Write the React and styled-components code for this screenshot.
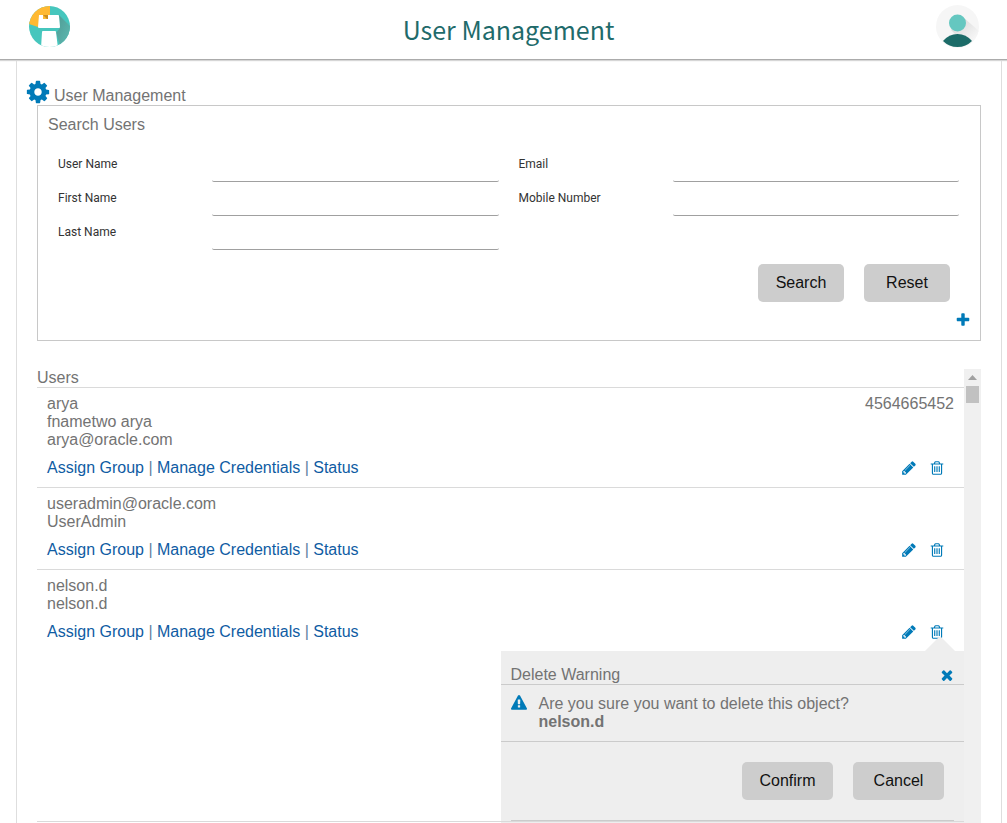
import React from 'react';
import styled, { createGlobalStyle } from 'styled-components';

const Global = createGlobalStyle`
  *, *::before, *::after { box-sizing: border-box; }
  body {
    margin: 0;
    background: #fff;
    color: #737373;
    font: 16px/18px "Liberation Sans", Arial, sans-serif;
  }
`;

const App = styled.div`
  display: flex;
  flex-direction: column;
  height: 100vh;
  overflow: hidden;
`;

const Header = styled.header`
  display: flex;
  flex: none;
  align-items: center;
  justify-content: space-between;
  height: 60px;
  padding: 0 28px 6px 29px;
  border-bottom: 1px solid #ababab;
  box-shadow: 0 1px 1px #d6d6d6;
`;

const Title = styled.h1`
  margin: 0;
  padding: 4px 0 0 10px;
  color: #1f6b6b;
  font: 400 25px/36px "Noto Sans CJK SC", sans-serif;
`;

const Drawing = styled.svg`
  display: block;
  flex: none;
  width: ${(p) => p.$size}px;
  height: ${(p) => p.$size}px;
`;

const Page = styled.main`
  display: flex;
  flex: 1;
  flex-direction: column;
  min-height: 0;
  margin: 1px 5px 0 16px;
  padding: 18px 20px 0;
  border: 1px solid #dedede;
  border-width: 0 1px;
`;

const PageHeading = styled.h2`
  display: flex;
  flex: none;
  align-items: center;
  gap: 3px;
  height: 26px;
  margin: 0 0 0 -12px;
  font: inherit;

  span { padding-top: 7px; }
`;

const SearchPanel = styled.form`
  display: flex;
  flex: none;
  flex-direction: column;
  padding: 10px 21px 12px 20px;
  border: 1px solid #c8c8c8;
`;

const PanelTitle = styled.h3`
  margin: 0 0 0 -10px;
  padding-bottom: 15px;
  font: inherit;
`;

const Fields = styled.div`
  display: flex;
  gap: 20px;
`;

const FieldColumn = styled.div`
  flex: 1;
  min-width: 0;
`;

const Field = styled.label`
  display: flex;
  align-items: flex-start;
  justify-content: space-between;
  height: 34px;
  color: #333;
  font: 12px/30px Roboto, sans-serif;
`;

const TextBox = styled.input`
  width: 65%;
  height: 29px;
  margin-top: 4px;
  padding: 0 4px;
  border: 0;
  border-bottom: 1px solid #a0a0a0;
  border-radius: 2px;
  outline: none;
  background: transparent;
  font: inherit;
`;

const ButtonRow = styled.div`
  display: flex;
  justify-content: flex-end;
  gap: 20px;
  padding: ${(p) => p.$padding};
`;

const Button = styled.button`
  min-width: ${(p) => p.$width || 86}px;
  height: 38px;
  padding: 0 16px;
  border: 0;
  border-radius: 5px;
  background: #cdcdcd;
  color: #111;
  font: inherit;
`;

const IconButton = styled.button`
  display: flex;
  align-items: center;
  justify-content: center;
  width: 16px;
  height: 16px;
  padding: 0;
  border: 0;
  background: none;
  color: #007ab8;
`;

const ExpandRow = styled.div`
  display: flex;
  justify-content: flex-end;
  margin-right: -12px;
  padding-top: 10px;
`;

const Glyph = styled.svg`
  display: block;
  flex: none;
  width: ${(p) => p.$size}px;
  height: ${(p) => p.$size}px;
  fill: #007ab8;
`;

const UsersArea = styled.section`
  display: flex;
  flex: 1;
  min-height: 0;
  margin-top: 28px;
`;

const UsersPane = styled.div`
  flex: 1;
  min-width: 0;
  overflow: hidden;
`;

const UsersTitle = styled.h3`
  height: 18px;
  margin: 0;
  font: inherit;
`;

const UserList = styled.ul`
  margin: 0;
  padding: 0;
  list-style: none;

  &::after {
    position: relative;
    display: block;
    border-top: 1px solid #dadada;
    content: "";
  }
`;

const UserItem = styled.li`
  border-top: 1px solid #dadada;
`;

const UserBody = styled.div`
  padding: 7px 10px 10px;
`;

const UserLine = styled.div`
  display: flex;
  justify-content: space-between;
`;

const Actions = styled.div`
  display: flex;
  align-items: center;
  justify-content: space-between;
  padding: 10px 9px 0 0;
`;

const Links = styled.nav`
  color: #5f7f9f;

  a {
    color: #0f5ca3;
    text-decoration: none;
  }
`;

const Tools = styled.div`
  display: flex;
  gap: 12px;
`;

const ScrollTrack = styled.div`
  display: flex;
  flex: none;
  flex-direction: column;
  align-items: center;
  width: 17px;
  background: #f0f0f0;

  svg { fill: #a0a0a0; }
`;

const ScrollThumb = styled.div`
  width: 13px;
  height: 17px;
  background: #c1c1c1;
`;

const Dialog = styled.section`
  position: relative;
  width: 50%;
  margin: 0 0 -13px auto;
  padding-top: 14px;
  background: #eee;

  &::before {
    position: absolute;
    top: -15px;
    right: 9px;
    border: 15px solid transparent;
    border-top: 0;
    border-bottom-color: #eee;
    content: "";
  }
`;

const DialogHeader = styled.header`
  display: flex;
  align-items: center;
  justify-content: space-between;
  height: 20px;
  padding: 0 9px 0 10px;
  border-bottom: 1px solid #cbcbcb;
`;

const DialogMessage = styled.div`
  display: flex;
  gap: 12px;
  height: 57px;
  padding: 10px;
  border-bottom: 1px solid #cbcbcb;

  p { margin: 0; }
`;

const DialogEnd = styled.div`
  height: 14px;
  margin: 0 10px;
  border-top: 1px solid #cbcbcb;
`;

const paths = {
  cog: 'M1152 896q0-106-75-181t-181-75-181 75-75 181 75 181 181 75 181-75 75-181zm512-109v222q0 12-8 23t-20 13l-185 28q-19 54-39 91 35 50 107 138 10 12 10 25t-9 23q-27 37-99 108t-94 71q-12 0-26-9l-138-108q-44 23-91 38-16 136-29 186-7 28-36 28h-222q-14 0-24.5-8.5t-11.5-21.5l-28-184q-49-16-90-37l-141 107q-10 9-25 9-14 0-25-11-126-114-165-168-7-10-7-23 0-12 8-23 15-21 51-66.5t54-70.5q-27-50-41-99l-183-27q-13-2-21-12.5t-8-23.5v-222q0-12 8-23t19-13l186-28q14-46 39-92-40-57-107-138-10-12-10-24 0-10 9-23 26-36 98.5-107.5t94.5-71.5q13 0 26 10l138 107q44-23 91-38 16-136 29-186 7-28 36-28h222q14 0 24.5 8.5t11.5 21.5l28 184q49 16 90 37l142-107q9-9 24-9 13 0 25 10 129 119 165 170 7 8 7 22 0 12-8 23-15 21-51 66.5t-54 70.5q26 50 41 98l183 28q13 2 21 12.5t8 23.5z',
  pencil: 'M491 1536l91-91-235-235-91 91v107h128v128h107zm523-928q0-22-22-22-10 0-17 7l-542 542q-7 7-7 17 0 22 22 22 10 0 17-7l542-542q7-7 7-17zm-54-192l416 416-832 832h-416v-416zm683 96q0 53-37 90l-166 166-416-416 166-165q36-38 90-38 53 0 91 38l235 234q37 39 37 91z',
  plus: 'M1600 736v192q0 40-28 68t-68 28h-416v416q0 40-28 68t-68 28h-192q-40 0-68-28t-28-68v-416h-416q-40 0-68-28t-28-68v-192q0-40 28-68t68-28h416v-416q0-40 28-68t68-28h192q40 0 68 28t28 68v416h416q40 0 68 28t28 68z',
  trash: 'M704 736v576q0 14-9 23t-23 9h-64q-14 0-23-9t-9-23v-576q0-14 9-23t23-9h64q14 0 23 9t9 23zm256 0v576q0 14-9 23t-23 9h-64q-14 0-23-9t-9-23v-576q0-14 9-23t23-9h64q14 0 23 9t9 23zm256 0v576q0 14-9 23t-23 9h-64q-14 0-23-9t-9-23v-576q0-14 9-23t23-9h64q14 0 23 9t9 23zm128 724v-948h-896v948q0 22 7 40.5t14.5 27 10.5 8.5h832q3 0 10.5-8.5t14.5-27 7-40.5zm-672-1076h448l-48-117q-7-9-17-11h-317q-10 2-17 11zm928 32v64q0 14-9 23t-23 9h-96v948q0 83-47 143.5t-113 60.5h-832q-66 0-113-58.5t-47-141.5v-952h-96q-14 0-23-9t-9-23v-64q0-14 9-23t23-9h309l70-167q15-37 54-63t79-26h320q40 0 79 26t54 63l70 167h309q14 0 23 9t9 23z',
  times: 'M1490 1322q0 40-28 68l-136 136q-28 28-68 28t-68-28l-294-294-294 294q-28 28-68 28t-68-28l-136-136q-28-28-28-68t28-68l294-294-294-294q-28-28-28-68t28-68l136-136q28-28 68-28t68 28l294 294 294-294q28-28 68-28t68 28l136 136q28 28 28 68t-28 68l-294 294 294 294q28 28 28 68z',
  warning: 'M1024 1375v-190q0-14-9.5-23.5t-22.5-9.5h-192q-13 0-22.5 9.5t-9.5 23.5v190q0 14 9.5 23.5t22.5 9.5h192q13 0 22.5-9.5t9.5-23.5zm-2-374l18-459q0-12-10-19-13-11-24-11h-220q-11 0-24 11-10 7-10 21l17 457q0 10 10 16.5t24 6.5h185q14 0 23.5-6.5t10.5-16.5zm-14-934l768 1408q35 63-2 126-17 29-46.5 46t-63.5 17h-1536q-34 0-63.5-17t-46.5-46q-37-63-2-126l768-1408q17-31 47-49t65-18 65 18 47 49z',
};

const Icon = ({ name, size = 16 }) => (
  <Glyph $size={size} viewBox="0 0 1792 1792" aria-hidden="true">
    <path d={paths[name]} />
  </Glyph>
);

const Logo = () => (
  <Drawing $size={42} viewBox="0 0 42 42" aria-hidden="true">
    <defs>
      <clipPath id="logoDisc"><circle cx="20.5" cy="20.5" r="20.5" /></clipPath>
      <linearGradient id="logoShade" x1="0" y1="0" x2="1" y2="1">
        <stop offset="0" stopColor="#4f9a93" />
        <stop offset="1" stopColor="#5fbdb5" />
      </linearGradient>
    </defs>
    <g clipPath="url(#logoDisc)">
      <rect width="42" height="42" fill="#46c6bd" />
      <path d="M21 0v21H9L0 18V0z" fill="#ffb931" />
      <path d="M30 9l12 12v21H32l-5-15 4-5z" fill="url(#logoShade)" />
      <path d="M14 9l5 5V9z" fill="#c98d1e" />
      <path d="M10 9h4v4h5V9h10q1 0 1 1l1 11q0 1-1 1H10q-1 0-1-1z" fill="#fff" />
      <path d="M14 25h12q1 0 1 1l2 16H12l1-16q0-1 1-1z" fill="#fff" />
    </g>
  </Drawing>
);

const Avatar = () => (
  <Drawing $size={43} viewBox="0 0 43 43" role="img" aria-label="Profile">
    <defs>
      <clipPath id="avatarDisc"><circle cx="21.5" cy="21.5" r="21.5" /></clipPath>
      <linearGradient id="avatarShade" x1="0" y1="0" x2="1" y2="1">
        <stop offset="0" stopColor="#d2d2d2" />
        <stop offset="0.8" stopColor="#f6f6f6" />
      </linearGradient>
    </defs>
    <g clipPath="url(#avatarDisc)">
      <rect width="43" height="43" fill="#f6f6f6" />
      <path d="M28 13l15 13v14H30L15 25z" fill="url(#avatarShade)" />
      <circle cx="21.5" cy="18" r="8.5" fill="#65c7c0" />
      <path d="M7 36q6-7 14.500-7T36 36q-6 6-14.500 6T7 36z" fill="#1c6b68" />
    </g>
  </Drawing>
);

const users = [
  { lines: ['arya', 'fnametwo arya', 'arya@oracle.com'], phone: '4564665452' },
  { lines: ['useradmin@oracle.com', 'UserAdmin'] },
  { lines: ['nelson.d', 'nelson.d'], deleting: true },
];

const fieldColumns = [
  ['User Name', 'First Name', 'Last Name'],
  ['Email', 'Mobile Number'],
];

const DeleteWarning = ({ name }) => (
  <Dialog role="dialog" aria-label="Delete Warning">
    <DialogHeader>
      <span>Delete Warning</span>
      <IconButton type="button" aria-label="Close"><Icon name="times" /></IconButton>
    </DialogHeader>
    <DialogMessage>
      <Icon name="warning" />
      <p>Are you sure you want to delete this object?<br /><b>{name}</b></p>
    </DialogMessage>
    <ButtonRow $padding="20px 20px 20px">
      <Button type="button" $width={91}>Confirm</Button>
      <Button type="button" $width={91}>Cancel</Button>
    </ButtonRow>
    <DialogEnd />
  </Dialog>
);

const User = ({ user }) => (
  <UserItem>
    <UserBody>
      {user.lines.map((line, i) => (
        <UserLine key={i}>
          <span>{line}</span>
          {i === 0 && user.phone && <span>{user.phone}</span>}
        </UserLine>
      ))}
      <Actions>
        <Links aria-label={user.lines[0]}>
          <a href="#group">Assign Group</a> | <a href="#credentials">Manage Credentials</a> | <a href="#status">Status</a>
        </Links>
        <Tools>
          <IconButton type="button" aria-label="Edit"><Icon name="pencil" /></IconButton>
          <IconButton type="button" aria-label="Delete"><Icon name="trash" /></IconButton>
        </Tools>
      </Actions>
    </UserBody>
    {user.deleting && <DeleteWarning name={user.lines[0]} />}
  </UserItem>
);

export default function UserManagement() {
  return (
    <App>
      <Global />
      <Header>
        <Logo />
        <Title>User Management</Title>
        <Avatar />
      </Header>
      <Page>
        <PageHeading><Icon name="cog" size={26} /><span>User Management</span></PageHeading>
        <SearchPanel>
          <PanelTitle>Search Users</PanelTitle>
          <Fields>
            {fieldColumns.map((labels) => (
              <FieldColumn key={labels[0]}>
                {labels.map((label) => (
                  <Field key={label}>{label}<TextBox type="text" /></Field>
                ))}
              </FieldColumn>
            ))}
          </Fields>
          <ButtonRow $padding="13px 9px 0 0">
            <Button type="button">Search</Button>
            <Button type="reset">Reset</Button>
          </ButtonRow>
          <ExpandRow>
            <IconButton type="button" aria-label="More search fields"><Icon name="plus" /></IconButton>
          </ExpandRow>
        </SearchPanel>
        <UsersArea>
          <UsersPane>
            <UsersTitle>Users</UsersTitle>
            <UserList>
              {users.map((user) => <User key={user.lines[0]} user={user} />)}
            </UserList>
          </UsersPane>
          <ScrollTrack aria-hidden="true">
            <svg width="17" height="17" viewBox="0 0 17 17"><path d="M4 11h9L8.500 6z" /></svg>
            <ScrollThumb />
          </ScrollTrack>
        </UsersArea>
      </Page>
    </App>
  );
}
